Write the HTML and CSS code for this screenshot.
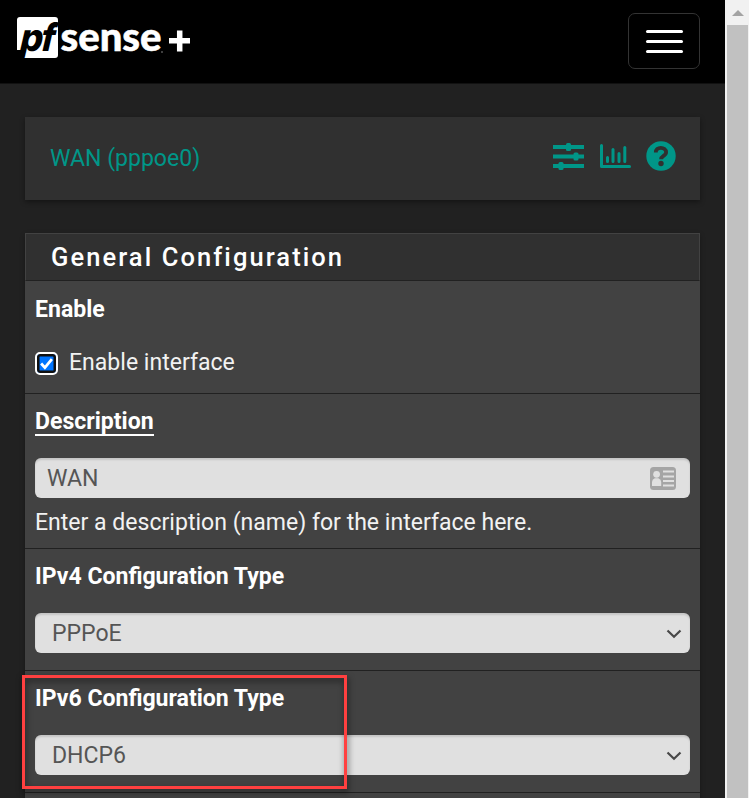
FILE: index.html
```html
<!DOCTYPE html>
<html lang="en">
<head>
<meta charset="utf-8">
<title>Interfaces: WAN</title>
<link rel="stylesheet" href="styles.css">
</head>
<body>
<div class="page">
  <header class="navbar">
    <svg class="logo" width="175" height="60" viewBox="0 0 175 60" role="img" aria-label="pfSense plus">
      <path d="M3 0H38Q41 0 41 3V38Q41 41 38 41H4L6 33H0V3Q0 0 3 0z" fill="#fff"/>
      <g transform="translate(0 33.500) skewX(-13)">
        <text class="logo-pf" x="1" y="0" textLength="23" lengthAdjust="spacingAndGlyphs">p</text>
        <text class="logo-pf" x="22" y="0" textLength="14" lengthAdjust="spacingAndGlyphs">f</text>
      </g>
      <text class="logo-name" x="43.5" y="34" textLength="101" lengthAdjust="spacingAndGlyphs">sense</text>
      <circle cx="145" cy="35" r="1" fill="#555"/>
      <path d="M152 23.800h21M162.700 13.500v21" stroke="#fff" stroke-width="5.500"/>
    </svg>
    <button class="toggler" aria-label="Menu"><i></i><i></i><i></i></button>
  </header>
  <main>
    <div class="crumb">
      <span>WAN (pppoe0)</span>
      <div class="icons">
        <svg width="31" height="28" viewBox="0 0 31 28" fill="currentColor"><path d="M0 3h31v4H0zM0 12.500h31v4H0zM0 22h31v4H0z"/><rect x="13" y="1" width="5" height="8" rx="1.500"/><rect x="20.500" y="10.500" width="5" height="8" rx="1.500"/><rect x="5.500" y="20" width="5" height="8" rx="1.500"/></svg>
        <svg width="31" height="24" viewBox="0 0 31 24" fill="none" stroke="currentColor" stroke-linecap="round"><path d="M1.500 1.500v21h28" stroke-width="3" stroke-linejoin="round"/><path d="M7.500 13.500v4M13 5.500v12M19 9.500v8M24.800 3.500v14" stroke-width="3"/></svg>
        <svg width="30" height="30" viewBox="0 0 30 30"><circle cx="15" cy="15" r="14.700" fill="currentColor"/><path d="M9.800 11.500c0-3 2.200-4.700 5-4.700s5.300 1.600 5.300 4.400c0 3.800-5 3.500-5 7" fill="none" stroke="#303030" stroke-width="3.800"/><circle cx="15" cy="22.500" r="2.700" fill="#303030"/></svg>
      </div>
    </div>
    <section class="panel">
      <h2>General Configuration</h2>
      <div class="row enable">
        <div class="label">Enable</div>
        <label class="check"><span class="box"><svg width="15" height="15" viewBox="0 0 14 14"><path d="M2 7l3.500 3.800L12 3" fill="none" stroke="#fff" stroke-width="2.600"/></svg></span>Enable interface</label>
      </div>
      <div class="row description">
        <div class="label"><span class="required">Description</span></div>
        <div class="field">WAN
          <svg width="26" height="23" viewBox="0 0 26 23"><rect width="26" height="23" rx="3.500" fill="#a5a5a5"/><circle cx="6.600" cy="7.300" r="3.400" fill="#e0e0e0"/><path d="M2 19v-4q0-2.800 2.800-3.800h3.600q2.800 1 2.800 3.800v4z" fill="#e0e0e0"/><path d="M13 4.500h11M13 9.500h11M13 14h11M13 18.500h11" stroke="#e0e0e0" stroke-width="2.200"/></svg>
        </div>
        <p class="help">Enter a description (name) for the interface here.</p>
      </div>
      <div class="row choice">
        <div class="label">IPv4 Configuration Type</div>
        <div class="field select">PPPoE<svg width="16" height="10" viewBox="0 0 16 10"><path d="M1.500 1.500L8 7.800l6.500-6.300" fill="none" stroke="#484848" stroke-width="2.200"/></svg></div>
      </div>
      <div class="row choice">
        <div class="label">IPv6 Configuration Type</div>
        <div class="field select">DHCP6<svg width="16" height="10" viewBox="0 0 16 10"><path d="M1.500 1.500L8 7.800l6.500-6.300" fill="none" stroke="#484848" stroke-width="2.200"/></svg></div>
        <div class="highlight"></div>
      </div>
      <div class="row"></div>
    </section>
  </main>
</div>
<div class="scrollbar"><svg width="12" height="6" viewBox="0 0 12 6"><path d="M6 0l6 6H0z" fill="#a3a3a3"/></svg><div class="thumb"></div></div>
</body>
</html>
```

FILE: styles.css
```css
* { box-sizing: border-box; }
body {
  margin: 0;
  height: 798px;
  overflow: hidden;
  display: flex;
  background: #212121;
  color: #f2f2f2;
  font: 23.050px/32px Roboto, sans-serif;
}
.page { width: 725px; height: 798px; overflow: hidden; }
.navbar {
  height: 84px;
  padding: 13px 25px 0 17px;
  display: flex;
  justify-content: space-between;
  align-items: flex-start;
  background: #000;
  border-bottom: 1px solid #111;
}
.logo { margin-top: 4px; overflow: visible; }
.logo-pf { font: 800 38px Inter, sans-serif; fill: #000; }
.logo-name { font: 900 39px Lato, sans-serif; fill: #fff; stroke: #fff; stroke-width: .5px; }
.toggler {
  width: 72px;
  height: 56px;
  padding: 0;
  display: flex;
  flex-direction: column;
  align-items: center;
  justify-content: center;
  gap: 7px;
  background: #000;
  border: 1px solid #333;
  border-radius: 7px;
}
.toggler i { width: 37px; height: 3px; border-radius: 1.500px; background: #fff; }
main { padding: 33px 25px 0; }
.crumb {
  height: 83px;
  margin-bottom: 33px;
  padding: 0 24px 0 25px;
  display: flex;
  align-items: center;
  justify-content: space-between;
  background: #303030;
  box-shadow: 0 2px 5px rgba(0, 0, 0, .4);
  color: #009688;
}
.icons { display: flex; align-items: center; gap: 15.500px; margin-top: -6px; }
.icons svg { display: block; }
.panel { background: #424242; box-shadow: 0 2px 5px rgba(0, 0, 0, .3); }
h2 {
  height: 48px;
  margin: 0;
  padding: 0 25px;
  border: 1px solid #424242;
  border-bottom-color: #212121;
  background: #303030;
  color: #fff;
  font-size: 25.500px;
  line-height: 46px;
  font-weight: 500;
  letter-spacing: 2.080px;
}
.row { position: relative; padding: 12px 10px 0; border-bottom: 1px solid #212121; }
.enable { height: 113px; padding-top: 13px; }
.description { height: 155px; }
.choice { height: 122px; }
.label { height: 32px; color: #fff; font-weight: 700; }
.required { display: inline-block; line-height: 32px; border-bottom: 2px solid #fff; height: 30px; margin-top: -1px; }
.check { display: flex; align-items: center; margin-top: 21px; gap: 11px; }
.box {
  width: 23px;
  height: 23px;
  display: flex;
  align-items: center;
  justify-content: center;
  background: #0075ff;
  border: 2px solid #fff;
  border-radius: 5px;
  box-shadow: inset 0 0 0 2.500px #101010;
}
.field {
  height: 40px;
  margin-top: 20px;
  padding: 1px 14px 0 12px;
  display: flex;
  align-items: center;
  justify-content: space-between;
  border-radius: 6px;
  background: #e0e0e0;
  box-shadow: inset 0 2px 2px rgba(0, 0, 0, .12);
  color: #555;
}
.select { padding: 1px 8px 0 17px; }
.help { margin: 9px 0 0; }
.highlight {
  position: absolute;
  left: -3px;
  top: 4px;
  width: 325px;
  height: 114px;
  border: 3px solid #ff4040;
  filter: drop-shadow(1px 3px 3px rgba(0, 0, 0, .6));
}
.scrollbar {
  width: 24px;
  padding: 10px 1px 0 2px;
  display: flex;
  flex-direction: column;
  align-items: center;
  background: #f1f1f1;
}
.scrollbar svg { flex: none; }
.thumb { width: 21px; flex: 1; margin-top: 9px; background: #c1c1c1; }
```
